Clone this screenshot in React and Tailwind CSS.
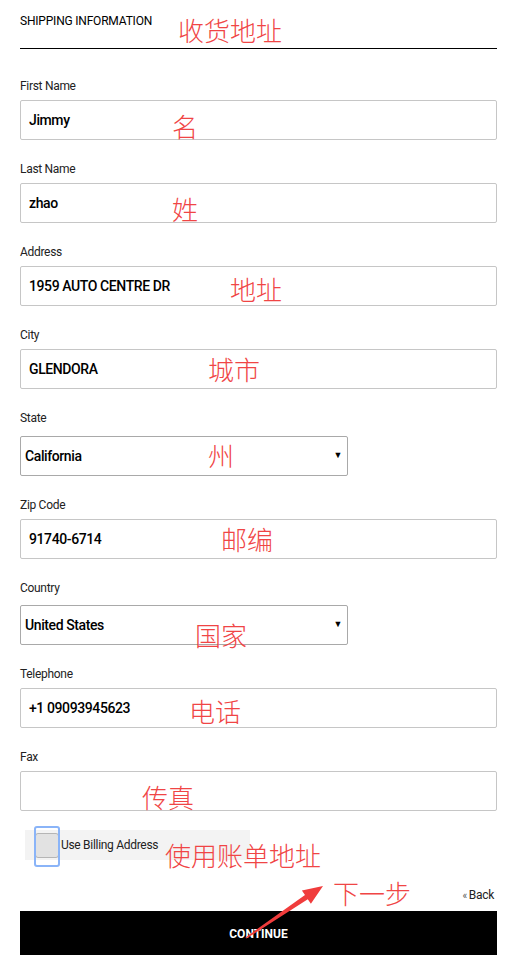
import React from 'react';

const uiFont = { fontFamily: 'Roboto, "Liberation Sans", sans-serif' };

const Field = ({ label, value }) => (
  <div className="mb-[21px]">
    <div className="h-[16px] mb-[6px] text-[12px] leading-[16px] text-[#222] tracking-[-0.3px]">{label}</div>
    <div className="h-[40px] border border-[#c6c6c6] rounded-[2px] flex items-center px-[8px] text-[14px] font-medium text-black tracking-[-0.4px]">
      {value}
    </div>
  </div>
);

const SelectField = ({ label, value, gap }) => (
  <div className="mb-[21px]">
    <div className={`h-[16px] text-[12px] leading-[16px] text-[#222] tracking-[-0.3px] ${gap}`}>{label}</div>
    <div className="w-[328px] h-[40px] border border-[#a9a9a9] rounded-[2px] flex items-center justify-between pl-[4px] pr-[5px] text-[14px] font-medium text-black tracking-[-0.4px]">
      <span>{value}</span>
      <span className="text-[9px]">▼</span>
    </div>
  </div>
);

const notes = [
  ['收货地址', 'left-[178px] top-[16px]'],
  ['名', 'left-[172px] top-[112px]'],
  ['姓', 'left-[172px] top-[195px]'],
  ['地址', 'left-[230px] top-[275px]'],
  ['城市', 'left-[208px] top-[355px]'],
  ['州', 'left-[208px] top-[441px]'],
  ['邮编', 'left-[221px] top-[525px]'],
  ['国家', 'left-[195px] top-[621px]'],
  ['电话', 'left-[189px] top-[697px]'],
  ['传真', 'left-[142px] top-[783px]'],
  ['使用账单地址', 'left-[165px] top-[841px]'],
  ['下一步', 'left-[333px] top-[879px]'],
];

export default function App() {
  return (
    <div className="relative w-[511px] h-[955px] overflow-hidden bg-white" style={uiFont}>
      <div className="pl-[20px] pr-[14px]">
        <div className="h-[49px] border-b border-black pt-[13px] text-[12px] leading-[16px] text-black uppercase tracking-[-0.2px]">
          Shipping Information
        </div>
        <div className="pt-[29px]">
          <Field label="First Name" value="Jimmy" />
          <Field label="Last Name" value="zhao" />
          <Field label="Address" value="1959 AUTO CENTRE DR" />
          <Field label="City" value="GLENDORA" />
          <SelectField label="State" value="California" gap="mb-[10px]" />
          <Field label="Zip Code" value="91740-6714" />
          <SelectField label="Country" value="United States" gap="mb-[9px]" />
          <Field label="Telephone" value="+1 09093945623" />
          <Field label="Fax" value="" />
        </div>

        <div className="-mt-[2px] ml-[5px] w-[225px] h-[30px] bg-[#f3f3f3] flex items-center">
          <div className="relative ml-[10px] w-[24px] h-[25px] bg-[#e2e2e2] border border-[#b5b5b5] rounded-[3px]">
            <div className="absolute -left-[2px] -right-[2px] -top-[8px] -bottom-[10px] border-2 border-[#8ab4f8] rounded-[3px]" />
          </div>
          <span className="ml-[2px] text-[12px] text-[#222] tracking-[-0.3px]">Use Billing Address</span>
        </div>

        <div className="mt-[26px] flex justify-end items-center pr-[3px] text-[12px] text-[#222] tracking-[-0.3px]">
          <span className="text-[10px] text-[#555] mr-[2px]">«</span>
          <span>Back</span>
        </div>

        <button className="mt-[7px] w-full h-[46px] bg-black text-white text-[12px] font-bold uppercase flex items-center justify-center">
          Continue
        </button>
      </div>

      {notes.map(([t, pos]) => (
        <div
          key={t}
          className={`absolute ${pos} text-[26px] leading-[28px] text-[#f04545] font-light`}
          style={{ fontFamily: '"Noto Sans CJK SC", sans-serif' }}
        >
          {t}
        </div>
      ))}

      <svg className="absolute left-0 top-0" width="511" height="955">
        <polygon
          points="246.3,938.6 307.8,899.3 310.9,903.8 323,886 301.9,890.6 305,895.1 245.5,937.4"
          fill="#f03c3c"
        />
      </svg>
    </div>
  );
}
